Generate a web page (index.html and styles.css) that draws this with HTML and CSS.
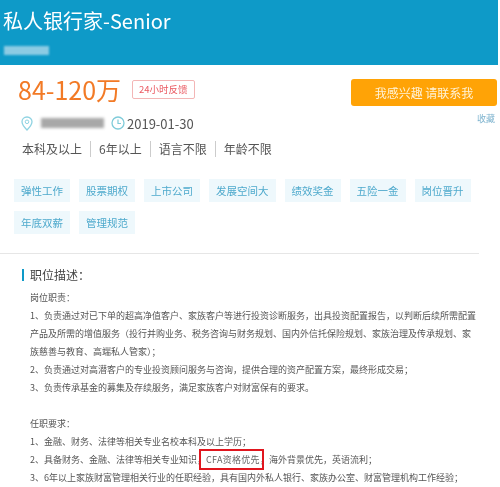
FILE: index.html
```html
<!DOCTYPE html>
<html lang="zh-CN">
<head>
    <meta charset="UTF-8">
    <meta name="viewport" content="width=device-width, initial-scale=1.0">
    <title>私人银行家-Senior</title>
    <link rel="stylesheet" href="styles.css">
</head>
<body>
    <header class="job-header">
        <h1>私人银行家-Senior</h1>
        <div class="company-blur"></div>
    </header>

    <section class="summary">
        <div class="summary-left">
            <div class="salary-row">
                <span class="salary">84-120万</span>
                <span class="feedback">24小时反馈</span>
            </div>
            <div class="meta-row">
                <svg class="icon-pin" width="12" height="15" viewBox="0 0 12 15">
                    <path d="M6 1C3 1 1 3.200 1 5.800C1 8.800 4 12 6 14C8 12 11 8.800 11 5.800C11 3.200 9 1 6 1Z" fill="none" stroke="#8fd3e2" stroke-width="1.300"/>
                    <circle cx="6" cy="5.800" r="1.800" fill="none" stroke="#8fd3e2" stroke-width="1"/>
                </svg>
                <div class="city-blur"></div>
                <svg class="icon-clock" width="14" height="14" viewBox="0 0 14 14">
                    <circle cx="7" cy="7" r="6" fill="none" stroke="#7fcbd9" stroke-width="1.300"/>
                    <path d="M7 3.500V7.500H10" fill="none" stroke="#7fcbd9" stroke-width="1.200"/>
                </svg>
                <span class="date">2019-01-30</span>
            </div>
            <ul class="requires">
                <li>本科及以上</li>
                <li>6年以上</li>
                <li>语言不限</li>
                <li>年龄不限</li>
            </ul>
        </div>
        <div class="summary-right">
            <button class="apply-btn" type="button">我感兴趣 请联系我</button>
            <a class="collect">收藏</a>
        </div>
    </section>

    <section class="tags">
        <span class="tag">弹性工作</span>
        <span class="tag">股票期权</span>
        <span class="tag">上市公司</span>
        <span class="tag">发展空间大</span>
        <span class="tag">绩效奖金</span>
        <span class="tag">五险一金</span>
        <span class="tag">岗位晋升</span>
        <span class="tag">年底双薪</span>
        <span class="tag">管理规范</span>
    </section>

    <section class="desc">
        <h2>职位描述：</h2>
        <p>岗位职责：</p>
        <p>1、负责通过对已下单的超高净值客户、家族客户等进行投资诊断服务，出具投资配置报告，以判断后续所需配置产品及所需的增值服务（投行并购业务、税务咨询与财务规划、国内外信托保险规划、家族治理及传承规划、家族慈善与教育、高端私人管家）；</p>
        <p>2、负责通过对高潜客户的专业投资顾问服务与咨询，提供合理的资产配置方案，最终形成交易；</p>
        <p>3、负责传承基金的募集及存续服务，满足家族客户对财富保有的要求。</p>
        <p class="gap">任职要求：</p>
        <p>1、金融、财务、法律等相关专业名校本科及以上学历；</p>
        <p>2、具备财务、金融、法律等相关专业知识，<span class="mark">CFA资格优先</span>，海外背景优先，英语流利；</p>
        <p>3、6年以上家族财富管理相关行业的任职经验，具有国内外私人银行、家族办公室、财富管理机构工作经验；</p>
    </section>
</body>
</html>
```

FILE: styles.css
```css
html, body {
    height: 487px;
    overflow: hidden;
}

body {
    margin: 0;
    font-family: "Noto Sans CJK SC", "Noto Sans", sans-serif;
    background-color: #ffffff;
    color: #555;
    filter: blur(0.4px);
}

.job-header {
    width: 498px;
    height: 65px;
    box-sizing: border-box;
    padding: 5px 3px 0;
    background-color: #0e9ac8;
    color: #ffffff;
}

h1 {
    margin: 0;
    font-size: 20px;
    font-weight: 400;
    line-height: 32px;
}

.company-blur {
    width: 45px;
    height: 9px;
    margin: 9px 0 0 1px;
    background-color: #8ccbe3;
    filter: blur(1px);
}

.summary {
    display: flex;
    justify-content: space-between;
    width: 498px;
    box-sizing: border-box;
    padding: 11px 1px 0 18px;
}

.salary-row {
    display: flex;
    align-items: center;
    height: 26px;
}

.salary {
    font-size: 25px;
    line-height: 26px;
    color: #f27a26;
}

.feedback {
    margin-left: 11px;
    padding: 0 6px;
    height: 17px;
    line-height: 17px;
    font-size: 9.500px;
    color: #ea5a62;
    border: 1px solid #f3b6b6;
    border-radius: 2px;
}

.meta-row {
    display: flex;
    align-items: center;
    height: 16px;
    margin: 13px 0 0 3px;
}

.city-blur {
    width: 63px;
    height: 10px;
    margin-left: 8px;
    background-color: #a8a8a8;
    filter: blur(1.500px);
}

.icon-clock {
    margin-left: 7px;
}

.date {
    margin-left: 2px;
    font-size: 13px;
    color: #555;
}

.requires {
    display: flex;
    margin: 10px 0 0 4px;
    padding: 0;
    list-style: none;
    font-size: 12px;
    line-height: 16px;
}

.requires li {
    padding-right: 8px;
    margin-right: 8px;
    border-right: 1px solid #ccc;
}

.requires li:last-child {
    border-right: none;
}

.summary-right {
    display: flex;
    flex-direction: column;
    align-items: flex-end;
    padding-top: 3px;
}

.apply-btn {
    width: 146px;
    height: 27px;
    padding: 0;
    border: none;
    border-radius: 3px;
    background-color: #ffa306;
    color: #fff3d8;
    font-family: inherit;
    font-size: 12px;
}

.collect {
    margin: 6px 2px 0 0;
    font-size: 9px;
    color: #7fb4cf;
}

.tags {
    display: flex;
    flex-wrap: wrap;
    align-content: flex-start;
    gap: 9px;
    width: 480px;
    box-sizing: border-box;
    padding: 0 0 0 14px;
    margin-top: 22px;
    height: 74px;
}

.tag {
    height: 23px;
    line-height: 23px;
    padding: 0 7px;
    font-size: 10.500px;
    color: #4ea9cc;
    background-color: #eef8fc;
}

.desc {
    border-top: 1px solid #e6e6e6;
    padding: 14px 0 0 30px;
    font-size: 9px;
    line-height: 18px;
    color: #555;
    width: 449px;
}

.desc h2 {
    position: relative;
    margin: 0 0 7px;
    font-size: 12px;
    font-weight: 400;
    line-height: 14px;
    color: #444;
}

.desc h2::before {
    content: "";
    position: absolute;
    left: -8px;
    top: 1px;
    width: 2px;
    height: 12px;
    background-color: #0e9ac8;
}

.desc p {
    margin: 0;
}

.desc .gap {
    margin-top: 18px;
}

.mark {
    position: relative;
    letter-spacing: 0.300px;
    color: #666;
}

.mark::after {
    content: "";
    position: absolute;
    left: -7px;
    right: -4px;
    top: -4px;
    bottom: -4px;
    border: 2.500px solid #e0161e;
}
```
